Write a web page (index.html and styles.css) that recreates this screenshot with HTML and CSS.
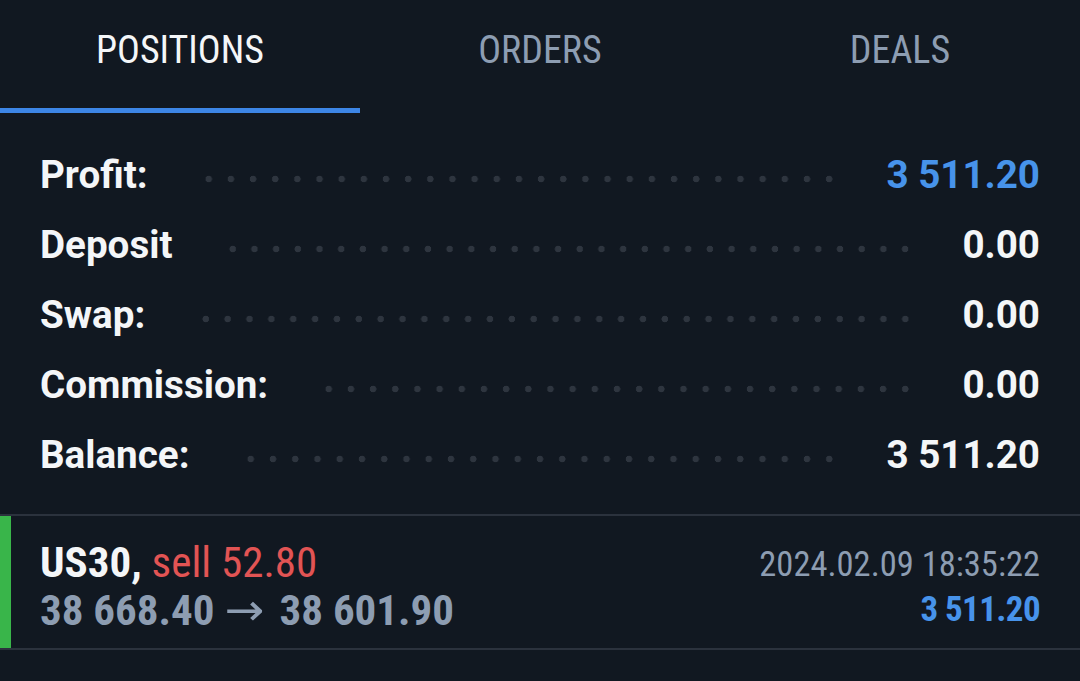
FILE: index.html
```html
<!DOCTYPE html>
<html>
<head>
<meta charset="utf-8">
<link rel="stylesheet" href="styles.css">
</head>
<body>
<div class="app">
  <nav class="tabs">
    <div class="tab active"><span>POSITIONS</span></div>
    <div class="tab"><span>ORDERS</span></div>
    <div class="tab"><span>DEALS</span></div>
  </nav>
  <section class="summary">
    <div class="row"><span class="label">Profit:</span><span class="dots"></span><span class="value blue">3 511.20</span></div>
    <div class="row"><span class="label">Deposit</span><span class="dots"></span><span class="value">0.00</span></div>
    <div class="row"><span class="label">Swap:</span><span class="dots"></span><span class="value">0.00</span></div>
    <div class="row"><span class="label">Commission:</span><span class="dots"></span><span class="value">0.00</span></div>
    <div class="row"><span class="label">Balance:</span><span class="dots"></span><span class="value">3 511.20</span></div>
  </section>
  <section class="position">
    <div class="pos-left">
      <div class="line1"><span class="sym">US30,</span> <span class="sell">sell 52.80</span></div>
      <div class="line2">38 668.40 <span class="arrow">→</span> 38 601.90</div>
    </div>
    <div class="pos-right">
      <div class="time">2024.02.09 18:35:22</div>
      <div class="pl">3 511.20</div>
    </div>
  </section>
</div>
</body>
</html>
```
FILE: styles.css
```css
html, body {
  margin: 0;
  padding: 0;
  background: #111821;
}
body {
  width: 1080px;
  height: 681px;
  overflow: hidden;
  font-family: Roboto, "Liberation Sans", sans-serif;
  color: #f4f6f8;
}
.tabs {
  display: flex;
  height: 113px;
}
.tab {
  flex: 1;
  display: flex;
  justify-content: center;
  padding-top: 31px;
  box-sizing: border-box;
  font-family: "Roboto Condensed", Roboto, sans-serif;
  font-stretch: condensed;
  font-size: 38px;
  line-height: 38px;
  color: #8d9db2;
}
.tab.active {
  color: #f4f6f8;
  border-bottom: 5px solid #3d86e6;
}
.summary {
  padding: 26px 40px 25px 40px;
}
.row {
  display: flex;
  align-items: center;
  height: 70px;
  font-weight: 700;
  font-size: 38.6px;
}
.label {
  color: #f4f6f8;
}
.dots {
  flex: 1;
  height: 8px;
  margin: 10px 46px 0 50px;
  background-image: radial-gradient(circle, #2e353f 3px, transparent 3.6px);
  background-size: 21.5px 8px;
  background-repeat: space no-repeat;
}
.value {
  color: #f4f6f8;
}
.value.blue {
  color: #4793ea;
}
.position {
  display: flex;
  justify-content: space-between;
  border-top: 2px solid #2b323d;
  border-bottom: 2px solid #2b323d;
  box-shadow: inset 11px 0 0 #39b54a;
  height: 136px;
  box-sizing: border-box;
  padding: 23px 40px 0 40px;
  font-family: "Roboto Condensed", Roboto, sans-serif;
  font-stretch: condensed;
}
.line1 {
  font-size: 43px;
  line-height: 47px;
}
.sym {
  font-weight: 700;
  color: #f4f6f8;
}
.sell {
  color: #e25454;
}
.line2 {
  font-size: 43px;
  line-height: 47px;
  font-weight: 700;
  color: #8d9db2;
}
.arrow {
  display: inline-block;
  font-family: "DejaVu Sans", sans-serif;
  font-weight: 400;
  font-size: 44px;
  transform: scaleX(1.2);
  margin: 0 8px 0 4px;
}
.pos-right {
  text-align: right;
  padding-top: 2px;
}
.time {
  font-size: 34.5px;
  line-height: 46px;
  color: #8d9db2;
}
.pl {
  font-size: 35px;
  letter-spacing: -0.6px;
  line-height: 46px;
  font-weight: 700;
  color: #4793ea;
}
```
